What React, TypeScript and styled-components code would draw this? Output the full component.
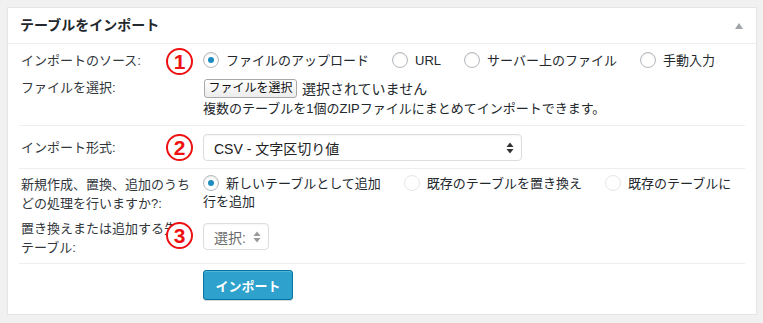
import React from 'react';
import styled, { createGlobalStyle } from 'styled-components';

const GlobalStyle = createGlobalStyle`
  body {
    margin: 0;
    background: #f1f1f1;
    font-family: "Liberation Sans", "Noto Sans CJK JP", sans-serif;
    color: #23282d;
  }
`;

const Panel = styled.div`
  box-sizing: border-box;
  width: 750px;
  margin: 7px 0 0 7px;
  background: #fff;
  border: 1px solid #e5e5e5;
  box-shadow: 0 1px 1px rgba(0, 0, 0, 0.04);
`;

const Header = styled.div`
  display: flex;
  align-items: center;
  justify-content: space-between;
  height: 35px;
  padding: 0 13px 0 12px;
  border-bottom: 1px solid #eee;
`;

const Title = styled.h3`
  margin: 0;
  font-size: 14px;
  font-weight: 700;
  line-height: 35px;
`;

const Toggle = styled.span`
  width: 0;
  height: 0;
  border-left: 4px solid transparent;
  border-right: 4px solid transparent;
  border-bottom: 6px solid #a0a5aa;
  margin-top: 1px;
`;

const Body = styled.div`
  padding: 0 11px;
`;

const Section = styled.div<{ $pt: number; $pb: number; $last?: boolean }>`
  padding: ${(p) => p.$pt}px 0 ${(p) => p.$pb}px;
  border-bottom: ${(p) => (p.$last ? 'none' : '1px solid #eee')};
`;

const Field = styled.div<{ $mt?: number; $center?: boolean }>`
  position: relative;
  display: grid;
  grid-template-columns: 184px 1fr;
  align-items: ${(p) => (p.$center ? 'center' : 'start')};
  margin-top: ${(p) => p.$mt ?? 0}px;
`;

const Label = styled.div<{ $lh: number }>`
  padding-left: 2px;
  font-size: 13px;
  line-height: ${(p) => p.$lh}px;
  color: #32373c;
`;

const Content = styled.div<{ $lh: number }>`
  padding-right: 6px;
  font-size: 13px;
  line-height: ${(p) => p.$lh}px;
`;

const Option = styled.label`
  display: inline;
  margin-right: 23px;
`;

const Radio = styled.span<{ $checked?: boolean; $disabled?: boolean }>`
  display: inline-block;
  box-sizing: border-box;
  width: 16px;
  height: 16px;
  border-radius: 50%;
  border: 1px solid ${(p) => (p.$disabled ? '#e6e6e6' : '#b4b9be')};
  background: #fff;
  box-shadow: ${(p) => (p.$disabled ? 'none' : 'inset 0 1px 2px rgba(0, 0, 0, 0.1)')};
  vertical-align: -3px;
  margin-right: 7px;
  position: relative;
  &::after {
    content: '';
    display: ${(p) => (p.$checked ? 'block' : 'none')};
    position: absolute;
    left: 4px;
    top: 4px;
    width: 6px;
    height: 6px;
    border-radius: 50%;
    background: #1e8cbe;
  }
`;

const FileLine = styled.div`
  display: flex;
  align-items: center;
  height: 20px;
  gap: 5px;
  font-size: 14px;
`;

const FileButton = styled.button`
  box-sizing: border-box;
  height: 19px;
  width: 93px;
  padding: 0;
  margin-left: 1px;
  font-family: inherit;
  font-size: 12px;
  line-height: 17px;
  color: #111;
  background: linear-gradient(#ffffff, #ececec);
  border: 1px solid #a9a9a9;
  border-radius: 3px;
`;

const Help = styled.div`
  font-size: 13px;
  line-height: 21px;
`;

const Select = styled.div<{ $width: number; $muted?: boolean }>`
  box-sizing: border-box;
  display: flex;
  align-items: center;
  justify-content: space-between;
  width: ${(p) => p.$width}px;
  height: 27px;
  padding: 0 7px 0 10px;
  border: 1px solid #ddd;
  border-radius: 4px;
  font-size: 14px;
  color: ${(p) => (p.$muted ? '#6b6b6b' : '#222')};
  box-shadow: inset 0 1px 2px rgba(0, 0, 0, 0.04);
`;

const SelectWrap = styled.div<{ $mt: number }>`
  margin-top: ${(p) => p.$mt}px;
`;

const Badge = styled.span<{ $top: number }>`
  position: absolute;
  left: 147px;
  top: ${(p) => p.$top}px;
  box-sizing: border-box;
  width: 27px;
  height: 27px;
  border: 2px solid #ee1111;
  border-radius: 50%;
  background: #fff;
  color: #ee1111;
  font-family: "Liberation Sans", sans-serif;
  font-weight: 700;
  font-size: 21px;
  line-height: 23px;
  text-align: center;
`;

const PrimaryButton = styled.button`
  box-sizing: border-box;
  width: 90px;
  height: 30px;
  padding: 0;
  font-family: inherit;
  font-size: 13px;
  font-weight: 700;
  color: #fff;
  background: #2ea2cc;
  border: 1px solid #0074a2;
  border-radius: 3px;
  box-shadow: inset 0 1px 0 rgba(120, 200, 230, 0.5), 0 1px 0 rgba(0, 0, 0, 0.15);
`;

const Arrows = ({ color }: { color: string }) => (
  <svg width="8" height="12" viewBox="0 0 8 12">
    <path d="M4 0.5 L7.5 5 L0.5 5 Z" fill={color} />
    <path d="M4 11.5 L7.5 7 L0.5 7 Z" fill={color} />
  </svg>
);

export default function App() {
  return (
    <>
      <GlobalStyle />
      <Panel>
        <Header>
          <Title>テーブルをインポート</Title>
          <Toggle />
        </Header>
        <Body>
          <Section $pt={7} $pb={6}>
            <Field $center>
              <Label $lh={20}>インポートのソース:</Label>
              <Content $lh={20}>
                <Option><Radio $checked />ファイルのアップロード</Option>
                <Option><Radio />URL</Option>
                <Option><Radio />サーバー上のファイル</Option>
                <Option><Radio />手動入力</Option>
              </Content>
              <Badge $top={-3}>1</Badge>
            </Field>
            <Field $mt={7}>
              <Label $lh={20}>ファイルを選択:</Label>
              <div>
                <FileLine>
                  <FileButton>ファイルを選択</FileButton>
                  選択されていません
                </FileLine>
                <Help>複数のテーブルを1個のZIPファイルにまとめてインポートできます。</Help>
              </div>
            </Field>
          </Section>

          <Section $pt={8} $pb={7}>
            <Field $center>
              <Label $lh={20}>インポート形式:</Label>
              <Select $width={319}>
                CSV - 文字区切り値
                <Arrows color="#333" />
              </Select>
              <Badge $top={0}>2</Badge>
            </Field>
          </Section>

          <Section $pt={6} $pb={6}>
            <Field>
              <Label $lh={19}>
                新規作成、置換、追加のうち
                <br />
                どの処理を行いますか?:
              </Label>
              <Content $lh={18}>
                <Option><Radio $checked />新しいテーブルとして追加</Option>
                <Option><Radio $disabled />既存のテーブルを置き換え</Option>
                <Option><Radio $disabled />既存のテーブルに行を追加</Option>
              </Content>
            </Field>
            <Field $mt={6}>
              <Label $lh={19}>
                置き換えまたは追加する先
                <br />
                テーブル:
              </Label>
              <SelectWrap $mt={4}>
                <Select $width={66} $muted>
                  選択:
                  <Arrows color="#999" />
                </Select>
              </SelectWrap>
              <Badge $top={3}>3</Badge>
            </Field>
          </Section>

          <Section $pt={6} $pb={14} $last>
            <Field>
              <div />
              <div>
                <PrimaryButton>インポート</PrimaryButton>
              </div>
            </Field>
          </Section>
        </Body>
      </Panel>
    </>
  );
}
